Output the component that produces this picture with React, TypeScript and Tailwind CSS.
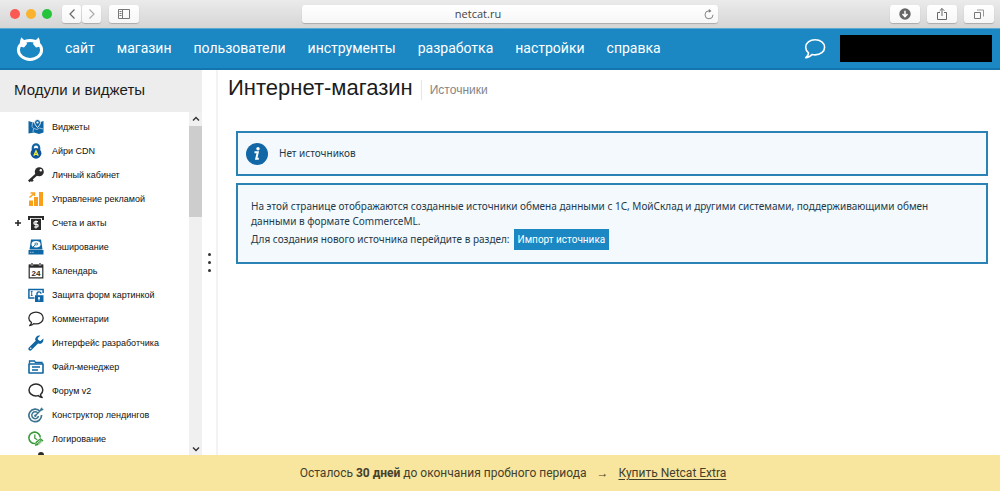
import type { ReactNode } from 'react';

const blue = '#0f66a4';
const dark = '#2b2b2b';

function Icon({ children }: { children: ReactNode }) {
  return (
    <svg viewBox="0 0 16 16" className="w-4 h-4 shrink-0" fill="none" aria-hidden="true">
      {children}
    </svg>
  );
}

const modules: { name: string; expandable?: boolean; icon: ReactNode }[] = [
  {
    name: 'Виджеты',
    icon: (
      <>
        <path d="M.5 2 5 3.500h6L15.500 2v11.500l-4.500 1.500-5-1.500-5.500 1z" fill={blue} />
        <path d="m4.500 3.500-.5 4 1.500 2L5 13M6 9.500l3 1 2.500-1.500 3.500 1" stroke="#cfe4f3" strokeWidth=".7" />
        <path d="M9.500.5a3 3 0 0 1 3 3c0 2-3 5-3 5s-3-3-3-5a3 3 0 0 1 3-3z" fill={blue} stroke="#fff" strokeWidth=".9" />
        <circle cx="9.500" cy="3.500" r="1.100" fill="#fff" />
      </>
    ),
  },
  {
    name: 'Айри CDN',
    icon: (
      <>
        <path d="M4.800 7V4.500a3.200 3.200 0 0 1 6.400 0V7" stroke={blue} strokeWidth="2.200" />
        <circle cx="8" cy="10.300" r="5.400" fill="#0c529b" />
        <path d="m5.800 12.800 2.200-5 2.200 5M6.700 11.300h2.600" stroke="#f2ea3c" strokeWidth="1.300" />
      </>
    ),
  },
  {
    name: 'Личный кабинет',
    icon: (
      <>
        <circle cx="11.300" cy="4.700" r="4.500" fill={dark} />
        <circle cx="12.800" cy="3.200" r="1.200" fill="#fff" />
        <path d="M9 7 .8 14.300M3 12.300l1.800 2" stroke={dark} strokeWidth="2.400" />
      </>
    ),
  },
  {
    name: 'Управление рекламой',
    icon: (
      <>
        <path d="M1 9.500h4V15H1zM6 6h4v9H6zM11 1h4v14h-4z" fill="#f9a01b" />
        <path d="m1.500 6.500 4-3.500M2.500 2h4v3" stroke="#f9a01b" strokeWidth="1.500" />
      </>
    ),
  },
  {
    name: 'Счета и акты',
    expandable: true,
    icon: (
      <>
        <path d="M0 1h16v4h-2V3H2v2H0z" fill={dark} />
        <path d="M3 3.800h10V15H3z" fill={dark} />
        <path d="M10 6.700H7.200a1.200 1.200 0 0 0 0 2.600h1.600a1.200 1.200 0 0 1 0 2.700H6M8 5.500v8" stroke="#fff" strokeWidth="1.200" />
      </>
    ),
  },
  {
    name: 'Кэширование',
    icon: (
      <>
        <path d="M3 .5h10l1.500 10h-13z" fill={blue} />
        <ellipse cx="8" cy="5.200" rx="4.500" ry="3.200" fill="#fff" />
        <ellipse cx="8.300" cy="5" rx="1.500" ry="1" stroke={blue} strokeWidth=".8" />
        <path d="m4.500 8.500 2.600-2.400" stroke={blue} strokeWidth="1" />
        <path d="M.5 11h15v4.500H.5z" fill={blue} />
        <path d="M2 13.300h1.300M4.300 13.300h1.300" stroke="#fff" strokeWidth=".7" />
      </>
    ),
  },
  {
    name: 'Календарь',
    icon: (
      <>
        <path d="M1.200 2h13.600v12.800H1.200z" stroke={dark} strokeWidth="1.200" />
        <path d="M1 1.700h14v3H1z" fill={dark} />
        <path d="M4 0v3M12 0v3" stroke="#fff" strokeWidth="2.200" />
        <path d="M4 0v3.200M12 0v3.200" stroke={dark} strokeWidth="1.200" />
        <text x="8" y="12.500" textAnchor="middle" fontSize="8" fontWeight="bold" fill={dark}>
          24
        </text>
      </>
    ),
  },
  {
    name: 'Защита форм картинкой',
    icon: (
      <>
        <path d="M6.500 11H.9V2.500h14.200V6" stroke={blue} strokeWidth="1.500" />
        <path d="M3.700 4.500v4M2.800 4.500h1.800M2.800 8.500h1.800" stroke={blue} strokeWidth=".9" />
        <path d="M7 8.200h8.500V15H7z" fill={blue} />
        <path d="M9 8.500V7a2 2 0 0 1 4-.3" stroke={blue} strokeWidth="1.400" />
        <circle cx="11" cy="11" r="1.100" fill="#fff" />
        <path d="M11 11v2.500" stroke="#fff" strokeWidth="1" />
      </>
    ),
  },
  {
    name: 'Комментарии',
    icon: (
      <path d="M3.500 11.500C1.700 10.400.8 8.800.8 7c0-3.300 3.200-5.900 7.200-5.900s7.200 2.600 7.200 5.900-3.200 5.900-7.200 5.900c-.9 0-1.600-.1-2.300-.3-1 1.200-2.400 1.900-4 2 .9-.8 1.800-1.900 1.800-3.100z" stroke={dark} strokeWidth="1.300" strokeLinejoin="round" />
    ),
  },
  {
    name: 'Интерфейс разработчика',
    icon: (
      <>
        <path d="m2.200 13.800 7.300-7.300" stroke={blue} strokeWidth="3.600" strokeLinecap="round" />
        <path d="M15.300 3.500 12.500 6l-2.300-.4-.5-2.300L12.300.6C9.500-.2 6.800 2 7.200 5l3.500 3.800c2.700.5 5.400-2 4.600-5.300z" fill={blue} />
        <circle cx="2.700" cy="13.300" r=".8" fill="#fff" />
      </>
    ),
  },
  {
    name: 'Файл-менеджер',
    icon: (
      <>
        <path d="M1.500 4.500V2h5l1 1.500H14V5" stroke={blue} strokeWidth="1.300" />
        <path d="M1 5h14v9H1z" stroke={blue} strokeWidth="1.600" strokeLinejoin="round" />
        <path d="M4 8h8M4 11h6" stroke={blue} strokeWidth="1.300" />
      </>
    ),
  },
  {
    name: 'Форум v2',
    icon: (
      <path d="M12.500 11.500c1.400-1.100 2.300-2.800 2.300-4.600C14.800 3.700 11.900 1 8 1S1 3.700 1 6.900s3 6 7 6c.8 0 1.500-.1 2.200-.3 1 1.200 2.300 1.800 4 1.900-.9-.7-1.700-1.700-1.700-3z" stroke={dark} strokeWidth="1.500" strokeLinejoin="round" />
    ),
  },
  {
    name: 'Конструктор лендингов',
    icon: (
      <>
        <path d="M12 4.300A6.300 6.300 0 1 0 13.500 8" stroke="#3d7590" strokeWidth="1.700" />
        <path d="M10 6.300A3.400 3.400 0 1 0 10.500 9" stroke="#3d7590" strokeWidth="1.500" />
        <circle cx="7.300" cy="8.800" r="1.200" fill="#3d7590" />
        <path d="m7.500 8.500 6-6" stroke="#3d7590" strokeWidth="1.200" />
        <path d="m12 3.800.5-2.300L14 .2l.4 1.500 1.500.4-1.500 1.500z" fill="#3d7590" />
      </>
    ),
  },
  {
    name: 'Логирование',
    icon: (
      <>
        <path d="M7 12.500A5.700 5.700 0 1 1 12.300 6.500" stroke="#3a9a38" strokeWidth="1.600" />
        <path d="M6.800 3.500v3.700l2.500 1.500" stroke="#3a9a38" strokeWidth="1.300" />
        <path d="m7 15 .5-4 5-4 3 2.500-5 4.500z" fill="#3a9a38" />
        <path d="m8.500 12.500 4-3.500M10 13.500l4-3.700" stroke="#fff" strokeWidth=".8" />
      </>
    ),
  },
];

const menu = ['сайт', 'магазин', 'пользователи', 'инструменты', 'разработка', 'настройки', 'справка'];

const toolButton =
  'h-[18px] flex items-center justify-center rounded-[3px] bg-gradient-to-b from-white to-[#f6f6f6] shadow-[0_1px_1px_#aaa]';

function BrowserBar() {
  return (
    <div className="h-7 shrink-0 flex items-center px-[10px] bg-gradient-to-b from-[#ebebeb] to-[#d5d5d5]">
      <div className="flex-1 flex items-center">
        <div className="flex gap-[6px]">
          <span className="w-[10px] h-[10px] rounded-full bg-[#fb5a54]" />
          <span className="w-[10px] h-[10px] rounded-full bg-[#f9b32e]" />
          <span className="w-[10px] h-[10px] rounded-full bg-[#25c43b]" />
        </div>
        <div className="flex gap-px ml-[10px]">
          <button aria-label="Назад" className={`${toolButton} w-[19px]`}>
            <svg viewBox="0 0 8 10" className="w-2 h-[10px]" fill="none">
              <path d="M6.500.5 2 5l4.500 4.500" stroke="#666" strokeWidth="1.200" />
            </svg>
          </button>
          <button aria-label="Вперёд" className={`${toolButton} w-[19px]`}>
            <svg viewBox="0 0 8 10" className="w-2 h-[10px]" fill="none">
              <path d="M1.500.5 6 5 1.500 9.500" stroke="#aaa" strokeWidth="1.200" />
            </svg>
          </button>
        </div>
        <button aria-label="Боковая панель" className={`${toolButton} w-[30px] ml-2`}>
          <svg viewBox="0 0 12 10" className="w-3 h-[10px]" fill="none" stroke="#777">
            <path d="M.5.500h11v9H.5zM4.500.500v9M1.500 2.500h2M1.500 4.500h2M1.500 6.500h2" />
          </svg>
        </button>
      </div>
      <div className={`${toolButton} relative w-[416px] ml-4`}>
        <input
          aria-label="Адрес"
          readOnly
          value="netcat.ru"
          className="w-full pr-[64px] bg-transparent text-center text-[11px] leading-[18px] text-[#444] font-['Open_Sans','Noto_Sans',sans-serif] outline-none"
        />
        <button aria-label="Обновить" className="absolute right-1 top-1">
          <svg viewBox="0 0 10 11" className="w-[10px] h-[11px]" fill="none">
            <path d="M5 1.800a4 4 0 1 0 4 4" stroke="#777" strokeWidth=".9" />
            <path d="m4.800 0 2.700 1.900-2.700 1.900z" fill="#777" />
          </svg>
        </button>
      </div>
      <div className="flex-1 flex justify-end gap-[7px] -mr-1">
        <button aria-label="Загрузки" className={`${toolButton} w-[30px]`}>
          <svg viewBox="0 0 12 12" className="w-3 h-3" fill="none">
            <circle cx="6" cy="6" r="5.700" fill="#666" />
            <path d="M6 2.700v5.500M3.500 6 6 8.600 8.500 6" stroke="#fff" strokeWidth="1.500" />
          </svg>
        </button>
        <button aria-label="Поделиться" className={`${toolButton} w-[30px]`}>
          <svg viewBox="0 0 12 14" className="w-3 h-[14px]" fill="none" stroke="#666">
            <path d="M4 5.500H1.500v7h9v-7H8M6 9V1.500M3.700 3.800 6 1.500l2.300 2.300" />
          </svg>
        </button>
        <button aria-label="Вкладки" className={`${toolButton} w-[30px]`}>
          <svg viewBox="0 0 12 12" className="w-3 h-3" fill="none" stroke="#777">
            <path d="M1.500 4.500h6v6h-6z" />
            <path d="M4 2h6.500v6.500" stroke="#999" />
          </svg>
        </button>
      </div>
    </div>
  );
}

function TopMenu() {
  return (
    <header className="h-[42px] shrink-0 flex items-center pl-4 pr-2 bg-[#1b87c3] border-t border-t-[#5ba8d2] border-b-2 border-b-[#1474ad]">
      <a href="#" aria-label="Netcat">
        <svg viewBox="0 0 28 26" className="w-7 h-[26px]" fill="none">
          <ellipse cx="14" cy="14" rx="11.600" ry="9.400" stroke="#fff" strokeWidth="3" />
          <path d="M4 10.500C3.600 7 4 4 5.500 1.300c1.200 1.700 2.700 2.900 4.500 3.700l1 3-3 3.500zM24 10.500c.4-3.500 0-6.500-1.500-9.200-1.200 1.700-2.700 2.900-4.500 3.700l-1 3 3 3.500z" fill="#fff" />
        </svg>
      </a>
      <nav className="flex-1 flex gap-[22px] ml-[21px] pb-px">
        {menu.map(item => (
          <a key={item} href="#" className="text-[14px] leading-5 text-white">
            {item}
          </a>
        ))}
      </nav>
      <button aria-label="Сообщения" className="mr-[14px]">
        <svg viewBox="0 0 22 22" className="w-[22px] h-[22px]" fill="none">
          <path d="M4.500 14.800C2.700 13.300 1.700 11.400 1.700 9.200c0-4.100 4-7.500 9.400-7.500s9.500 3.400 9.500 7.500c0 4.300-4.200 7.700-9.500 7.700-1.100 0-2.100-.1-3.100-.4-1.500 1.700-3.600 3.200-6.300 3.200 1.900-1.200 2.800-3.200 2.800-4.900z" stroke="#fff" strokeWidth="1.600" strokeLinejoin="round" />
        </svg>
      </button>
      <div className="w-[152px] h-[27px] bg-black" />
    </header>
  );
}

function Sidebar() {
  return (
    <aside className="w-[202px] shrink-0 flex flex-col font-['Liberation_Sans',Arial,sans-serif]">
      <h2 className="h-[42px] shrink-0 pl-[14px] text-[15px] leading-[40px] text-[#1c1c1c] bg-[#ededed]">
        Модули и виджеты
      </h2>
      <div className="flex-1 min-h-0 flex">
        <ul className="flex-1 overflow-hidden pt-[3px]">
          {modules.map(m => (
            <li key={m.name} className="h-6 flex items-center pl-[14px]">
              {m.expandable ? (
                <button aria-label="Развернуть" className="w-[14px]">
                  <svg viewBox="0 0 8 8" className="w-2 h-2">
                    <path d="M4 1v6M1 4h6" stroke="#222" strokeWidth="1.500" />
                  </svg>
                </button>
              ) : (
                <span className="w-[14px]" />
              )}
              <a href="#" className="flex items-center gap-2 text-[9px] leading-4 text-[#111] whitespace-nowrap">
                <Icon>{m.icon}</Icon>
                {m.name}
              </a>
            </li>
          ))}
          <li className="h-6 pl-7 pt-px">
            <Icon>
              <circle cx="13" cy="3" r="3" fill={dark} />
            </Icon>
          </li>
        </ul>
        <div className="w-[13px] flex flex-col items-center bg-[#f0f0f0]" aria-hidden="true">
          <svg viewBox="0 0 8 6" className="w-2 h-[14px] shrink-0" fill="none">
            <path d="m1 4.500 3-3 3 3" stroke="#333" strokeWidth="1.400" />
          </svg>
          <span className="w-full h-[91px] bg-[#cdcdcd]" />
          <svg viewBox="0 0 8 6" className="w-2 h-3 mt-auto shrink-0" fill="none">
            <path d="m1 1.500 3 3 3-3" stroke="#333" strokeWidth="1.400" />
          </svg>
        </div>
      </div>
    </aside>
  );
}

function Content() {
  return (
    <main className="flex-1 min-w-0 border-l-2 border-[#f3f3f3]">
      <div className="flex items-center gap-2 h-9 pl-[10px] font-['Liberation_Sans',Arial,sans-serif]">
        <h1 className="text-[22px] leading-8 text-[#1c1c1c]">Интернет-магазин</h1>
        <span className="mt-1 pl-2 border-l border-[#e6e6e6] text-[12px] leading-5 text-[#858585]">Источники</span>
      </div>
      <div className="flex flex-col gap-[7px] pt-[25px] pl-[18px] pr-3 text-[10px] text-[#24394b] font-['Noto_Sans',sans-serif]">
        <div className="h-[45px] flex items-center gap-[11px] pl-2 bg-[#f3f9fc] border-2 border-[#2b83b5]">
          <svg viewBox="0 0 22 22" className="w-[22px] h-[22px]" fill="none">
            <circle cx="11" cy="11" r="11" fill="#1268a6" />
            <circle cx="12" cy="5.700" r="1.700" fill="#fff" />
            <path d="M8.500 9.300h3.300l-1.600 6.500h2.600" stroke="#fff" strokeWidth="2" />
          </svg>
          <p>Нет источников</p>
        </div>
        <div className="pt-[14px] pb-3 pl-[13px] pr-5 leading-[15px] bg-[#f3f9fc] border-2 border-[#2b83b5]">
          <p>
            На этой странице отображаются созданные источники обмена данными с 1С, МойСклад и другими системами,
            поддерживающими обмен данными в формате CommerceML.
          </p>
          <div className="flex items-center gap-1">
            Для создания нового источника перейдите в раздел:
            <button className="h-[21px] px-1 bg-[#1b87c3] text-[10px] text-white font-['Roboto',sans-serif]">
              Импорт источника
            </button>
          </div>
        </div>
      </div>
    </main>
  );
}

export default function App() {
  return (
    <div className="h-screen flex flex-col bg-white pb-px font-['Roboto',sans-serif]">
      <BrowserBar />
      <TopMenu />
      <div className="flex-1 min-h-0 flex">
        <Sidebar />
        <div className="w-[14px] shrink-0 flex flex-col items-center justify-center gap-[5px]">
          <span className="w-[3px] h-[3px] rounded-full bg-[#333]" />
          <span className="w-[3px] h-[3px] rounded-full bg-[#333]" />
          <span className="w-[3px] h-[3px] rounded-full bg-[#333]" />
        </div>
        <Content />
      </div>
      <footer className="h-9 shrink-0 flex items-center justify-center pl-[26px] bg-[#f8e69f] text-[12px] text-[#44402c]">
        <p>
          Осталось <b className="font-bold">30 дней</b> до окончания пробного периода
        </p>
        <span className="mx-[10px] font-['Liberation_Sans',sans-serif]">→</span>
        <a href="#" className="underline underline-offset-2">
          Купить Netcat Extra
        </a>
      </footer>
    </div>
  );
}
